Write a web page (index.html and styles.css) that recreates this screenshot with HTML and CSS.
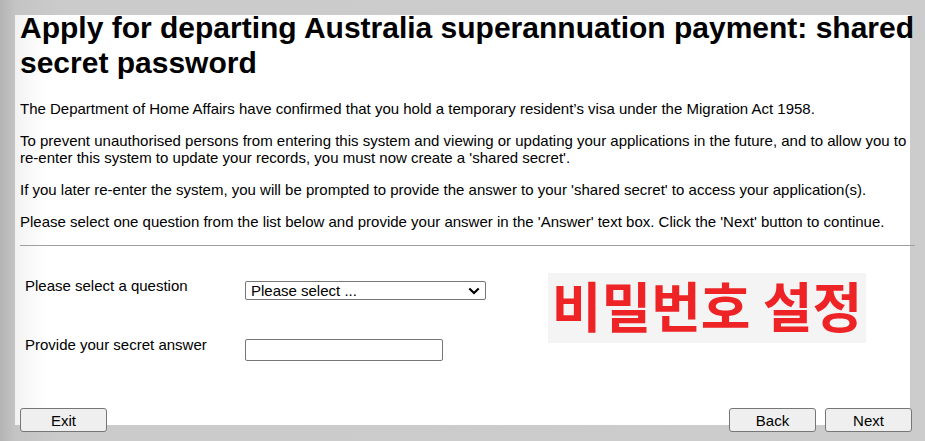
FILE: index.html
```html
<!DOCTYPE html>
<html lang="en">
<head>
<meta charset="utf-8">
<title>Shared secret password</title>
<link rel="stylesheet" href="styles.css">
</head>
<body>
<div class="panel">
  <div class="content">
    <h1 class="title">Apply for departing Australia superannuation payment: shared secret password</h1>
    <p class="para">The Department of Home Affairs have confirmed that you hold a temporary resident’s visa under the Migration Act 1958.</p>
    <p class="para">To prevent unauthorised persons from entering this system and viewing or updating your applications in the future, and to allow you to re-enter this system to update your records, you must now create a 'shared secret'.</p>
    <p class="para">If you later re-enter the system, you will be prompted to provide the answer to your 'shared secret' to access your application(s).</p>
    <p class="para">Please select one question from the list below and provide your answer in the 'Answer' text box. Click the 'Next' button to continue.</p>
    <hr class="rule">
    <div class="form">
      <label class="label label-q" for="q">Please select a question</label>
      <div class="ctrl ctrl-q">
        <div class="select-wrap">
          <select id="q" class="select">
            <option>Please select ...</option>
          </select>
          <svg class="chev" width="12" height="8" viewBox="0 0 12 8" aria-hidden="true"><path d="M1.3 1.5 L6 6 L10.7 1.5" fill="none" stroke="#000" stroke-width="2.2"/></svg>
        </div>
      </div>
      <label class="label label-a" for="a">Provide your secret answer</label>
      <div class="ctrl ctrl-a">
        <input id="a" class="input" type="text">
      </div>
      <div class="banner"><span class="banner-text">비밀번호 설정</span></div>
    </div>
  </div>
  <div class="footer">
    <button class="btn" type="button">Exit</button>
    <div class="footer-right">
      <button class="btn" type="button">Back</button>
      <button class="btn" type="button">Next</button>
    </div>
  </div>
</div>
</body>
</html>
```

FILE: styles.css
```css
html, body {
  margin: 0;
  padding: 0;
}
body {
  width: 925px;
  height: 441px;
  overflow: hidden;
  background: linear-gradient(90deg, #b4b4b4 0, #c4c4c4 15px, #cbcbcb 60px, #cccccc 100%);
  font-family: "Liberation Sans", Arial, sans-serif;
  color: #000;
  padding-top: 15px;
  box-sizing: border-box;
}
.panel {
  margin-left: 15px;
  width: 895px;
  height: 410px;
  background: linear-gradient(90deg, #f2f2f2 0, #ffffff 30px);
  display: flex;
  flex-direction: column;
}
.content {
  width: 895px;
  padding-left: 5px;
  box-sizing: border-box;
  flex: 1;
  overflow: visible;
}
.title {
  font-size: 30px;
  line-height: 35px;
  font-weight: bold;
  margin: -5px 0 20px 0;
  width: 900px;
}
.para {
  font-size: 15px;
  line-height: 17px;
  margin: 15px 0;
  width: 900px;
}
.title + .para {
  margin-top: 20px;
}
.para + .para {
  margin-top: 14px;
}
.rule {
  width: 895px;
  margin: 15px 0 0 0;
  border: 0;
  border-top: 1px solid #a0a0a0;
  height: 0;
}
.form {
  display: grid;
  grid-template-columns: 220px 303px auto;
  grid-template-rows: 59px 40px;
  padding-top: 28px;
  padding-left: 5px;
}
.label {
  font-size: 15px;
  line-height: 17px;
  padding-top: 3px;
}
.label-q { grid-column: 1; grid-row: 1; }
.label-a { grid-column: 1; grid-row: 2; }
.ctrl-q { grid-column: 2; grid-row: 1; padding-top: 7px; }
.ctrl-a { grid-column: 2; grid-row: 2; padding-top: 6px; }
.select-wrap {
  position: relative;
  width: 241px;
  height: 19px;
}
.select {
  -webkit-appearance: none;
  appearance: none;
  display: block;
  width: 241px;
  height: 19px;
  box-sizing: border-box;
  font-family: "Liberation Sans", Arial, sans-serif;
  font-size: 15px;
  line-height: 17px;
  border: 1px solid #767676;
  border-radius: 2px;
  background: #fff;
  color: #000;
  padding: 0 0 0 5px;
  margin: 0;
}
.chev {
  position: absolute;
  right: 6px;
  top: 6px;
  pointer-events: none;
}
.input {
  width: 198px;
  height: 22px;
  box-sizing: border-box;
  border: 1px solid #767676;
  border-radius: 2px;
  margin: 0;
  padding: 0 3px;
  font-size: 15px;
}
.banner {
  grid-column: 3;
  grid-row: 1 / span 2;
  width: 318px;
  height: 70px;
  background: #f4f4f4;
  display: flex;
  align-items: center;
  justify-content: center;
  margin-top: -1px;
  padding-bottom: 6px;
  box-sizing: border-box;
}
.banner-text {
  color: #ee2326;
  font-family: "Noto Sans CJK KR", "Noto Sans", sans-serif;
  font-weight: bold;
  font-size: 54px;
  line-height: 1;
  letter-spacing: 0;
}
.footer {
  display: flex;
  justify-content: space-between;
  width: 897px;
  padding-left: 5px;
  box-sizing: border-box;
  margin-bottom: -7px;
}
.footer-right {
  display: flex;
  gap: 9px;
}
.btn {
  width: 87px;
  height: 24px;
  font-family: "Liberation Sans", Arial, sans-serif;
  font-size: 15px;
  color: #000;
  background: #efefef;
  border: 1px solid #767676;
  border-radius: 3px;
  padding: 0;
  margin: 0;
}
```
